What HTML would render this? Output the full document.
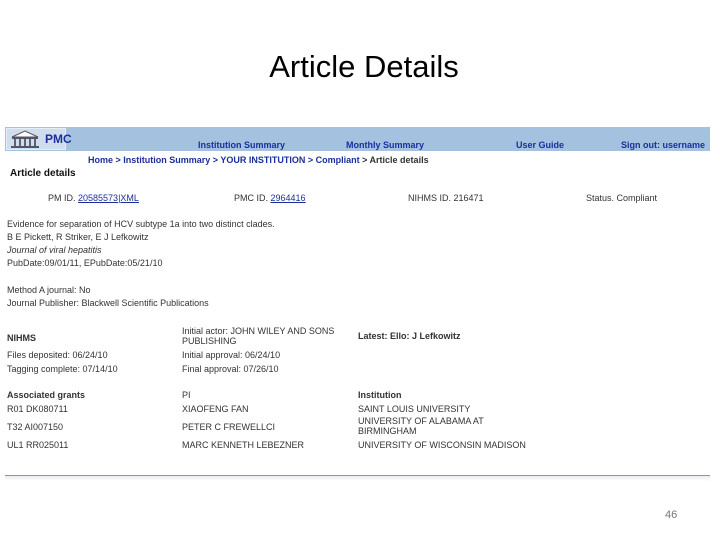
<!DOCTYPE html>
<html><head><meta charset="utf-8"><style>
body{margin:0;width:720px;height:540px;background:#fff;position:relative;overflow:hidden;font-family:"Liberation Sans",Arial,sans-serif;}
.a{position:absolute;white-space:nowrap;font-size:9px;color:#333;line-height:10px;}
.b{font-weight:bold;}
.nav{color:#1a2f9c;font-weight:bold;font-size:9px;}
.l{color:#1a2f9c;text-decoration:underline;}
</style></head><body>
<div class="a" style="left:0;width:728px;top:50px;text-align:center;font-size:31px;line-height:34px;color:#000;">Article Details</div>
<div style="position:absolute;left:5px;top:127px;width:705px;height:24px;background:#a4c2e0;"></div>
<div style="position:absolute;left:6px;top:128px;width:60px;height:22px;background:#cfdded;border:1px solid #e8eef6;box-sizing:border-box;"></div>
<svg style="position:absolute;left:9px;top:130px" width="32" height="18" viewBox="0 0 32 18"><path d="M3 7 L16 1 L29 7 Z" fill="#fff" stroke="#556" stroke-width="1"/><rect x="3" y="7" width="26" height="2" fill="#556"/><g stroke="#445" stroke-width="1.6"><line x1="6" y1="9" x2="6" y2="16"/><line x1="11" y1="9" x2="11" y2="16"/><line x1="16" y1="9" x2="16" y2="16"/><line x1="21" y1="9" x2="21" y2="16"/><line x1="26" y1="9" x2="26" y2="16"/></g><rect x="2" y="16" width="28" height="2" fill="#556"/></svg>
<div class="a nav" style="left:45px;top:132px;font-size:12px;line-height:14px;color:#1a2f9c;">PMC</div>
<div class="a nav" style="left:198px;top:140px;">Institution Summary</div>
<div class="a nav" style="left:346px;top:140px;">Monthly Summary</div>
<div class="a nav" style="left:516px;top:140px;">User Guide</div>
<div class="a nav" style="left:621px;top:140px;">Sign out: username</div>
<div class="a" style="left:88px;top:155px;color:#1a2f9c;font-weight:bold;">Home &gt; Institution Summary &gt; YOUR INSTITUTION &gt; Compliant <span style="color:#333">&gt; Article details</span></div>
<div class="a b" style="left:10px;top:169px;font-size:10px;color:#111;">Article details</div>
<div class="a" style="left:48px;top:193px;">PM ID. <span class="l">20585573</span>|<span class="l">XML</span></div>
<div class="a" style="left:234px;top:193px;">PMC ID. <span class="l">2964416</span></div>
<div class="a" style="left:408px;top:193px;">NIHMS ID. 216471</div>
<div class="a" style="left:586px;top:193px;">Status. Compliant</div>
<div class="a" style="left:7px;top:219px;">Evidence for separation of HCV subtype 1a into two distinct clades.</div>
<div class="a" style="left:7px;top:232px;">B E Pickett, R Striker, E J Lefkowitz</div>
<div class="a" style="left:7px;top:245px;font-style:italic;">Journal of viral hepatitis</div>
<div class="a" style="left:7px;top:258px;">PubDate:09/01/11, EPubDate:05/21/10</div>
<div class="a" style="left:7px;top:285px;">Method A journal: No</div>
<div class="a" style="left:7px;top:298px;">Journal Publisher: Blackwell Scientific Publications</div>
<div class="a b" style="left:7px;top:333px;">NIHMS</div>
<div class="a" style="left:7px;top:350px;">Files deposited: 06/24/10</div>
<div class="a" style="left:7px;top:364px;">Tagging complete: 07/14/10</div>
<div class="a" style="left:182px;top:326px;">Initial actor: JOHN WILEY AND SONS<br>PUBLISHING</div>
<div class="a" style="left:182px;top:350px;">Initial approval: 06/24/10</div>
<div class="a" style="left:182px;top:364px;">Final approval: 07/26/10</div>
<div class="a b" style="left:358px;top:331px;">Latest: Ello: J Lefkowitz</div>
<div class="a b" style="left:7px;top:390px;">Associated grants</div>
<div class="a" style="left:7px;top:404px;">R01 DK080711</div>
<div class="a" style="left:7px;top:422px;">T32 AI007150</div>
<div class="a" style="left:7px;top:440px;">UL1 RR025011</div>
<div class="a" style="left:182px;top:390px;">PI</div>
<div class="a" style="left:182px;top:404px;">XIAOFENG FAN</div>
<div class="a" style="left:182px;top:422px;">PETER C FREWELLCI</div>
<div class="a" style="left:182px;top:440px;">MARC KENNETH LEBEZNER</div>
<div class="a b" style="left:358px;top:390px;">Institution</div>
<div class="a" style="left:358px;top:404px;">SAINT LOUIS UNIVERSITY</div>
<div class="a" style="left:358px;top:416px;">UNIVERSITY OF ALABAMA AT<br>BIRMINGHAM</div>
<div class="a" style="left:358px;top:440px;">UNIVERSITY OF WISCONSIN MADISON</div>
<div style="position:absolute;left:5px;top:475px;width:705px;height:1px;background:#8a9a98;"></div>
<div style="position:absolute;left:5px;top:476px;width:705px;height:5px;background:linear-gradient(#e8ecee,#fff);"></div>
<div class="a" style="left:665px;top:509px;font-size:11px;line-height:12px;color:#777;">46</div>
</body></html>
